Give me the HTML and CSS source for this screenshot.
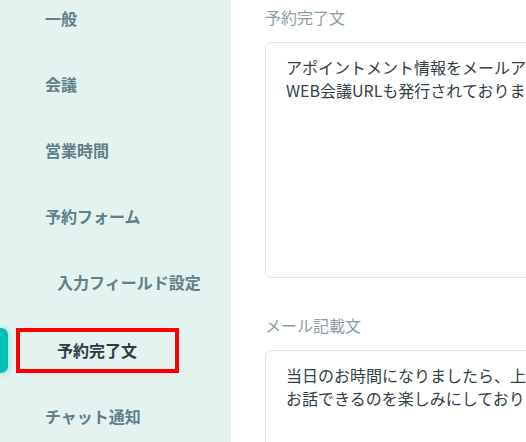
FILE: index.html
```html
<!DOCTYPE html>
<html lang="ja">
<head>
    <meta charset="UTF-8">
    <meta name="viewport" content="width=device-width, initial-scale=1.0">
    <title>予約完了文 設定</title>
    <link rel="stylesheet" href="styles.css">
</head>
<body>
    <div class="layout">
        <nav class="sidebar">
            <ul class="menu">
                <li class="menu-item">一般</li>
                <li class="menu-item">会議</li>
                <li class="menu-item">営業時間</li>
                <li class="menu-item">予約フォーム</li>
                <li class="menu-item sub">入力フィールド設定</li>
                <li class="menu-item sub active">
                    <span class="marker"></span>
                    <span class="highlight">予約完了文</span>
                </li>
                <li class="menu-item">チャット通知</li>
            </ul>
        </nav>
        <main class="content">
            <div class="field">
                <label class="field-label" for="completeText">予約完了文</label>
                <div class="text-box" id="completeText">アポイントメント情報をメールアドレスにお送りしました。<br>WEB会議URLも発行されております。</div>
            </div>
            <div class="field">
                <label class="field-label" for="mailText">メール記載文</label>
                <div class="text-box" id="mailText">当日のお時間になりましたら、上記URLよりご参加ください。<br>お話できるのを楽しみにしております。</div>
            </div>
        </main>
    </div>
</body>
</html>
```

FILE: styles.css
```css
html, body {
    margin: 0;
    padding: 0;
    height: 100%;
    overflow: hidden;
}
body {
    font-family: "Noto Sans CJK JP", "Noto Sans", sans-serif;
    background: #fff;
}
.layout {
    display: flex;
    height: 100%;
}
.sidebar {
    width: 231px;
    flex-shrink: 0;
    background: #e4f3ef;
    overflow: hidden;
}
.menu {
    list-style: none;
    margin: -15px 0 0;
    padding: 0;
}
.menu-item {
    position: relative;
    height: 66px;
    display: flex;
    align-items: center;
    padding-left: 45px;
    font-size: 16px;
    font-weight: bold;
    color: #5f7f89;
}
.menu-item.sub {
    padding-left: 57px;
}
.menu-item.active {
    color: #2b3c43;
    margin-top: 2px;
}
.highlight {
    display: flex;
    align-items: center;
    height: 45px;
    width: 163px;
    margin-left: -41px;
    padding-left: 37px;
    box-sizing: border-box;
    border: 4px solid #ff0000;
}
.marker {
    position: absolute;
    left: 0;
    top: 11px;
    width: 8px;
    height: 45px;
    background: #00c2b6;
    border-radius: 0 7px 7px 0;
    box-shadow: 0 0 6px rgba(0, 194, 182, 0.5);
}
.content {
    flex: 1;
    min-width: 0;
    padding: 5px 0 0 34px;
    overflow: hidden;
}
.field {
    width: 640px;
    margin-bottom: 35px;
}
.field-label {
    display: block;
    font-size: 16px;
    color: #8c9ea4;
    line-height: 24px;
    margin-bottom: 13px;
}
.text-box {
    border: 1px solid #d3e7e8;
    border-radius: 6px;
    padding: 13px 20px;
    font-size: 16px;
    line-height: 23px;
    color: #333f45;
    white-space: nowrap;
    height: 208px;
}
```
